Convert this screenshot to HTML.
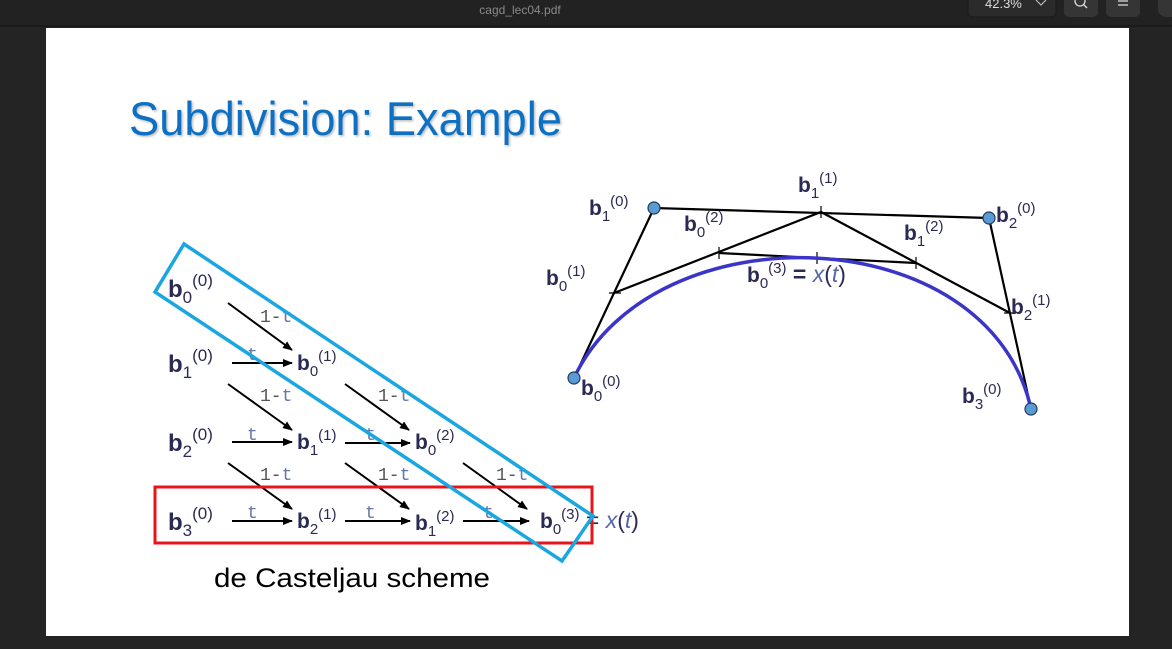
<!DOCTYPE html>
<html><head><meta charset="utf-8"><style>
html,body{margin:0;padding:0;background:#242424;width:1172px;height:649px;overflow:hidden}
svg{display:block}
</style></head><body>
<svg width="1172" height="649" viewBox="0 0 1172 649" xmlns="http://www.w3.org/2000/svg" font-family="Liberation Sans, sans-serif">
<defs>
<marker id="ar" markerWidth="10" markerHeight="10" refX="9" refY="5" orient="auto" markerUnits="userSpaceOnUse"><path d="M0,1 L10,5 L0,9 z" fill="#000"/></marker>
<filter id="sh"><feDropShadow dx="1.5" dy="1.5" stdDeviation="1" flood-color="#000" flood-opacity="0.25"/></filter>
</defs>
<rect x="0" y="0" width="1172" height="25" fill="#222"/>
<rect x="0" y="25" width="1172" height="2" fill="#1a1a1a"/>
<text x="520" y="14" fill="#8a8a8a" font-size="12" text-anchor="middle">cagd_lec04.pdf</text>
<rect x="968" y="-6" width="88" height="23" rx="5" fill="#2b2b2b" stroke="#1a1a1a"/>
<text x="985" y="8" fill="#ddd" font-size="13">42.3%</text>
<path d="M1036,0 L1041,5 L1046,0" fill="none" stroke="#bbb" stroke-width="1.2"/>
<rect x="1064" y="-6" width="34" height="23" rx="5" fill="#353535"/>
<circle cx="1080" cy="1" r="5" fill="none" stroke="#ddd" stroke-width="1.3"/>
<path d="M1084,5 L1087,8" stroke="#ddd" stroke-width="1.3"/>
<rect x="1106" y="-6" width="34" height="23" rx="5" fill="#353535"/>
<path d="M1118,1h10M1118,5h10" stroke="#ddd" stroke-width="1.2"/>
<rect x="1158" y="-6" width="30" height="23" rx="8" fill="#353535"/>
<rect x="46" y="28" width="1083" height="608" fill="#fff"/>

<text x="129" y="135" fill="#0a6fc2" font-size="47" textLength="433" lengthAdjust="spacingAndGlyphs" filter="url(#sh)">Subdivision: Example</text>

<g stroke="#000" stroke-width="2.2" fill="none">
<polyline points="574,378 654,208 989,218 1031,409"/>
<polyline points="614,293 821,212 1010,313"/>
<polyline points="719,253 916,263"/>
<path d="M609,293h12M719,247v12M821,206v12M916,257v12M1004,313h12M817,252v12" stroke-width="1.2"/>
</g>
<path d="M574,378 C654,208 989,218 1031,409" fill="none" stroke="#3a35c8" stroke-width="3.5"/>
<g fill="#5b9bd5" stroke="#1f3a5a" stroke-width="1.2">
<circle cx="574" cy="378" r="6"/><circle cx="654" cy="208" r="6"/><circle cx="989" cy="218" r="6"/><circle cx="1031" cy="409" r="6"/>
</g>
<g fill="#2a2a55" font-size="21" font-weight="bold">
<text x="589" y="215">b<tspan font-size="15" dy="6" font-weight="normal">1</tspan><tspan font-size="15" dy="-15" font-weight="normal">(0)</tspan></text>
<text x="798" y="192">b<tspan font-size="15" dy="6" font-weight="normal">1</tspan><tspan font-size="15" dy="-15" font-weight="normal">(1)</tspan></text>
<text x="996" y="222">b<tspan font-size="15" dy="6" font-weight="normal">2</tspan><tspan font-size="15" dy="-15" font-weight="normal">(0)</tspan></text>
<text x="684" y="231">b<tspan font-size="15" dy="6" font-weight="normal">0</tspan><tspan font-size="15" dy="-15" font-weight="normal">(2)</tspan></text>
<text x="904" y="240">b<tspan font-size="15" dy="6" font-weight="normal">1</tspan><tspan font-size="15" dy="-15" font-weight="normal">(2)</tspan></text>
<text x="546" y="285">b<tspan font-size="15" dy="6" font-weight="normal">0</tspan><tspan font-size="15" dy="-15" font-weight="normal">(1)</tspan></text>
<text x="747" y="282">b<tspan font-size="15" dy="6" font-weight="normal">0</tspan><tspan font-size="15" dy="-15" font-weight="normal">(3)</tspan><tspan dy="9" font-size="23"> = </tspan><tspan fill="#5566aa" font-style="italic" font-weight="normal" font-size="23">x</tspan><tspan font-weight="normal" font-size="23">(</tspan><tspan fill="#5566aa" font-style="italic" font-weight="normal" font-size="23">t</tspan><tspan font-weight="normal" font-size="23">)</tspan></text>
<text x="1011" y="314">b<tspan font-size="15" dy="6" font-weight="normal">2</tspan><tspan font-size="15" dy="-15" font-weight="normal">(1)</tspan></text>
<text x="581" y="395">b<tspan font-size="15" dy="6" font-weight="normal">0</tspan><tspan font-size="15" dy="-15" font-weight="normal">(0)</tspan></text>
<text x="962" y="403">b<tspan font-size="15" dy="6" font-weight="normal">3</tspan><tspan font-size="15" dy="-15" font-weight="normal">(0)</tspan></text>
</g>

<g stroke="#000" stroke-width="2" marker-end="url(#ar)">
<line x1="228" y1="303" x2="292" y2="350"/>
<line x1="232" y1="363" x2="292" y2="363"/>
<line x1="228" y1="384" x2="292" y2="430"/>
<line x1="345" y1="384" x2="409" y2="430"/>
<line x1="232" y1="442" x2="292" y2="442"/>
<line x1="345" y1="443" x2="410" y2="443"/>
<line x1="228" y1="463" x2="292" y2="509"/>
<line x1="345" y1="463" x2="409" y2="509"/>
<line x1="463" y1="463" x2="527" y2="509"/>
<line x1="232" y1="521" x2="292" y2="521"/>
<line x1="345" y1="521" x2="410" y2="521"/>
<line x1="463" y1="521" x2="529" y2="521"/>
</g>
<g font-family="Liberation Mono, monospace" font-size="18" fill="#555">
<text x="260" y="322">1-<tspan fill="#6677aa">t</tspan></text>
<text x="260" y="401">1-<tspan fill="#6677aa">t</tspan></text>
<text x="378" y="401">1-<tspan fill="#6677aa">t</tspan></text>
<text x="260" y="480">1-<tspan fill="#6677aa">t</tspan></text>
<text x="378" y="480">1-<tspan fill="#6677aa">t</tspan></text>
<text x="496" y="480">1-<tspan fill="#6677aa">t</tspan></text>
<g fill="#6677aa"><text x="247" y="360">t</text><text x="247" y="440">t</text><text x="365" y="440">t</text><text x="247" y="518">t</text><text x="365" y="518">t</text><text x="483" y="518">t</text></g>
</g>
<g fill="#2a2a55" font-size="24" font-weight="bold">
<text x="168" y="297">b<tspan font-size="17" dy="6" font-weight="normal">0</tspan><tspan font-size="17" dy="-17" font-weight="normal">(0)</tspan></text>
<text x="168" y="372">b<tspan font-size="17" dy="6" font-weight="normal">1</tspan><tspan font-size="17" dy="-17" font-weight="normal">(0)</tspan></text>
<text x="168" y="451">b<tspan font-size="17" dy="6" font-weight="normal">2</tspan><tspan font-size="17" dy="-17" font-weight="normal">(0)</tspan></text>
<text x="168" y="530">b<tspan font-size="17" dy="6" font-weight="normal">3</tspan><tspan font-size="17" dy="-17" font-weight="normal">(0)</tspan></text>
<g font-size="21">
<text x="297" y="370">b<tspan font-size="15" dy="6" font-weight="normal">0</tspan><tspan font-size="15" dy="-15" font-weight="normal">(1)</tspan></text>
<text x="297" y="449">b<tspan font-size="15" dy="6" font-weight="normal">1</tspan><tspan font-size="15" dy="-15" font-weight="normal">(1)</tspan></text>
<text x="415" y="449">b<tspan font-size="15" dy="6" font-weight="normal">0</tspan><tspan font-size="15" dy="-15" font-weight="normal">(2)</tspan></text>
<text x="297" y="528">b<tspan font-size="15" dy="6" font-weight="normal">2</tspan><tspan font-size="15" dy="-15" font-weight="normal">(1)</tspan></text>
<text x="415" y="530">b<tspan font-size="15" dy="6" font-weight="normal">1</tspan><tspan font-size="15" dy="-15" font-weight="normal">(2)</tspan></text>
<text x="540" y="528">b<tspan font-size="15" dy="6" font-weight="normal">0</tspan><tspan font-size="15" dy="-15" font-weight="normal">(3)</tspan><tspan dy="9" font-size="23" font-weight="normal"> = </tspan><tspan fill="#5566aa" font-style="italic" font-weight="normal" font-size="23">x</tspan><tspan font-weight="normal" font-size="23">(</tspan><tspan fill="#5566aa" font-style="italic" font-weight="normal" font-size="23">t</tspan><tspan font-weight="normal" font-size="23">)</tspan></text>
</g>
</g>
<rect x="155" y="487" width="437" height="56" fill="none" stroke="#e8141a" stroke-width="3"/>
<polygon points="184,244 593,516 562,561 155,292" fill="none" stroke="#1aa6e0" stroke-width="3.5"/>
<text x="214" y="587" font-size="27" fill="#000" textLength="276" lengthAdjust="spacingAndGlyphs">de Casteljau scheme</text>
</svg>
</body></html>
